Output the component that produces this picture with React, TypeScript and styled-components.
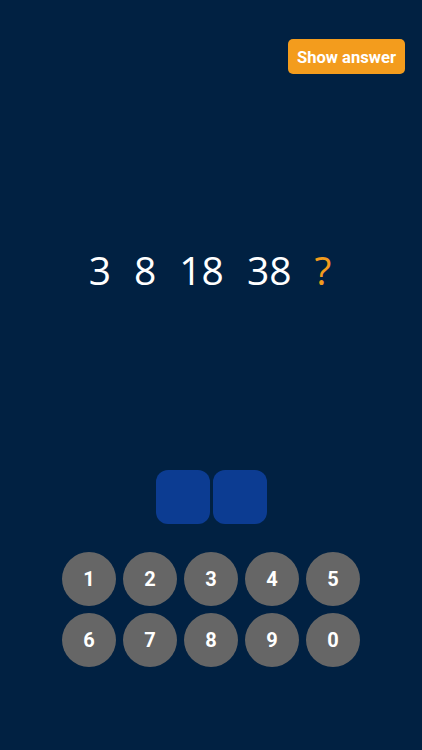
import styled, { createGlobalStyle } from 'styled-components';

const GlobalStyle = createGlobalStyle`
  html, body {
    margin: 0;
    padding: 0;
    background: #012142;
  }
`;

const Page = styled.div`
  display: flex;
  flex-direction: column;
  align-items: center;
  width: 422px;
  height: 750px;
  background: #012142;
  font-family: 'Roboto', 'Liberation Sans', sans-serif;
`;

const Header = styled.div`
  display: flex;
  justify-content: flex-end;
  width: 100%;
  box-sizing: border-box;
  padding: 39px 17px 0 0;
`;

const AnswerButton = styled.button`
  width: 117px;
  height: 35px;
  border: none;
  border-radius: 5px;
  background: #f39c1d;
  color: #ffffff;
  font-family: 'Roboto', 'Liberation Sans', sans-serif;
  font-weight: 700;
  font-size: 16.6px;
  padding: 1px 0 0;
`;

const Sequence = styled.div`
  display: flex;
  gap: 23px;
  margin-top: 172px;
  margin-left: -2px;
  font-family: 'Open Sans', 'Noto Sans', sans-serif;
  font-size: 39px;
  line-height: 47px;
`;

const Term = styled.span<{ $unknown?: boolean }>`
  color: ${(p) => (p.$unknown ? '#f39c1d' : '#ffffff')};
`;

const Slots = styled.div`
  display: flex;
  gap: 3px;
  margin-top: 177px;
`;

const Slot = styled.div`
  width: 54px;
  height: 54px;
  border-radius: 12px;
  background: #0c3c92;
`;

const Keypad = styled.div`
  display: grid;
  grid-template-columns: repeat(5, 54px);
  gap: 7px;
  margin-top: 28px;
`;

const Key = styled.button`
  width: 54px;
  height: 54px;
  border: none;
  border-radius: 50%;
  background: #666666;
  color: #ffffff;
  font-family: 'Roboto', 'Liberation Sans', sans-serif;
  font-weight: 700;
  font-size: 20px;
  padding: 0;
`;

const terms = ['3', '8', '18', '38'];
const keys = ['1', '2', '3', '4', '5', '6', '7', '8', '9', '0'];

export default function App() {
  return (
    <Page>
      <GlobalStyle />
      <Header>
        <AnswerButton>Show answer</AnswerButton>
      </Header>
      <Sequence>
        {terms.map((t) => (
          <Term key={t}>{t}</Term>
        ))}
        <Term $unknown>?</Term>
      </Sequence>
      <Slots>
        <Slot />
        <Slot />
      </Slots>
      <Keypad>
        {keys.map((k) => (
          <Key key={k}>{k}</Key>
        ))}
      </Keypad>
    </Page>
  );
}
